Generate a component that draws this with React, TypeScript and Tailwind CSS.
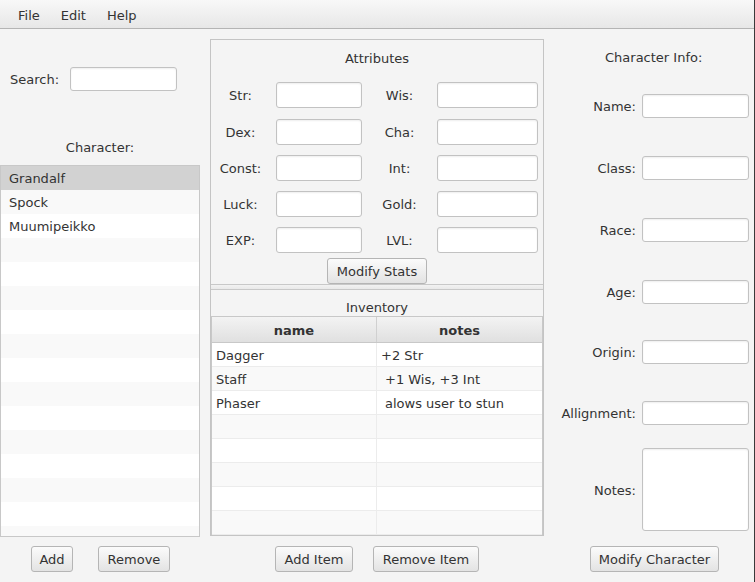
import React from "react";

const Field = ({ className = "" }: { className?: string }) => (
  <input
    className={`bg-white border border-[#c2c2c2] rounded-[3px] shadow-[inset_0_1px_2px_rgba(0,0,0,0.07)] outline-none ${className}`}
  />
);

const Btn = ({ children, className = "" }: { children: React.ReactNode; className?: string }) => (
  <button
    className={`h-[26px] rounded-[3px] border border-[#b5b5b5] bg-linear-to-b from-[#fbfbfb] to-[#e3e3e3] text-[#333] text-[13px] leading-none flex items-center justify-center ${className}`}
  >
    {children}
  </button>
);

const characters = ["Grandalf", "Spock", "Muumipeikko"];

const stats = [
  ["Str:", "Wis:"],
  ["Dex:", "Cha:"],
  ["Const:", "Int:"],
  ["Luck:", "Gold:"],
  ["EXP:", "LVL:"],
];

const items = [
  { name: "Dagger", notes: "+2 Str", pad: "pl-[4px]" },
  { name: "Staff", notes: "+1 Wis, +3 Int", pad: "pl-[8px]" },
  { name: "Phaser", notes: "alows user to stun", pad: "pl-[8px]" },
];

const infoRows = [
  { label: "Name:", mt: "mt-[28px]" },
  { label: "Class:", mt: "mt-[38px]" },
  { label: "Race:", mt: "mt-[38px]" },
  { label: "Age:", mt: "mt-[38px]" },
  { label: "Origin:", mt: "mt-[36px]" },
  { label: "Allignment:", mt: "mt-[37px]" },
];

export default function App() {
  return (
    <div className="w-[755px] h-[582px] bg-[#f4f4f4] text-[#333] text-[13px] font-['DejaVu_Sans',sans-serif] flex flex-col border-r border-[#3a3a3a] overflow-hidden">
      {/* Menu bar */}
      <div className="h-[29px] shrink-0 flex items-center gap-[21px] pl-[18px] pt-[4px] bg-linear-to-b from-[#f8f8f8] to-[#e7e7e7] border-b border-[#b4b4b4]">
        <span>File</span>
        <span>Edit</span>
        <span>Help</span>
      </div>

      <div className="flex flex-1">
        {/* Left column */}
        <div className="w-[200px] flex flex-col">
          <div className="flex items-center mt-[38px] h-[24px]">
            <span className="ml-[10px] w-[60px] pt-[2px]">Search:</span>
            <Field className="w-[107px] h-[24px]" />
          </div>
          <div className="mt-[49px] h-[16px] leading-[16px] text-center">Character:</div>
          <div className="mt-[9px] h-[372px] border border-[#c8c8c8] bg-white overflow-hidden">
            {Array.from({ length: 16 }).map((_, i) => (
              <div
                key={i}
                className={`h-[24px] flex items-center pl-[8px] pt-[2px] ${
                  i === 0 ? "bg-[#d2d2d2]" : i % 2 === 1 ? "bg-[#f9f9f9]" : "bg-white"
                }`}
              >
                {characters[i] ?? ""}
              </div>
            ))}
          </div>
          <div className="mt-[9px] flex gap-[25px] ml-[31px]">
            <Btn className="w-[42px]">Add</Btn>
            <Btn className="w-[72px]">Remove</Btn>
          </div>
        </div>

        {/* Middle column */}
        <div className="ml-[10px] w-[334px] flex flex-col">
          <div className="mt-[10px] h-[497px] border border-[#c4c4c4] flex flex-col">
            {/* Attributes */}
            <div className="h-[245px] flex flex-col">
              <div className="mt-[11px] h-[16px] leading-[16px] text-center">Attributes</div>
              <div className="mt-[15px] flex flex-col gap-[10px]">
                {stats.map(([a, b], i) => (
                  <div key={a} className={`flex items-center h-[26px] ${i === 1 ? "mt-[1px]" : ""}`}>
                    <span className="w-[59px] text-center pt-[2px]">{a}</span>
                    <Field className="ml-[6px] w-[86px] h-[26px]" />
                    <span className="w-[75px] text-center pt-[2px]">{b}</span>
                    <Field className="w-[101px] h-[26px]" />
                  </div>
                ))}
              </div>
              <div className="mt-[5px] flex justify-center">
                <Btn className="w-[100px]">Modify Stats</Btn>
              </div>
            </div>
            {/* Divider */}
            <div className="h-[7px] border-y border-[#c8c8c8] bg-linear-to-b from-[#f2f2f2] to-[#e9e9e9]" />
            {/* Inventory */}
            <div className="flex-1 flex flex-col">
              <div className="mt-[10px] h-[16px] leading-[16px] text-center">Inventory</div>
              <div className="flex-1 border-x border-t border-[#c8c8c8] bg-white overflow-hidden">
                <div className="h-[26px] flex font-bold border-b border-[#c8c8c8] bg-linear-to-b from-[#f3f3f3] to-[#e0e0e0]">
                  <div className="w-[165px] border-r border-[#d0d0d0] flex items-center justify-center pt-[2px]">name</div>
                  <div className="flex-1 flex items-center justify-center pt-[2px]">notes</div>
                </div>
                {Array.from({ length: 8 }).map((_, i) => (
                  <div
                    key={i}
                    className={`h-[24px] flex border-b border-[#ececec] ${i % 2 === 1 ? "bg-[#f9f9f9]" : "bg-white"}`}
                  >
                    <div className="w-[165px] border-r border-[#ececec] flex items-center pl-[4px] pt-[2px]">
                      {items[i]?.name ?? ""}
                    </div>
                    <div className={`flex-1 flex items-center pt-[2px] ${items[i]?.pad ?? ""}`}>
                      {items[i]?.notes ?? ""}
                    </div>
                  </div>
                ))}
              </div>
            </div>
          </div>
          <div className="mt-[10px] flex gap-[20px] ml-[65px]">
            <Btn className="w-[78px]">Add Item</Btn>
            <Btn className="w-[106px]">Remove Item</Btn>
          </div>
        </div>

        {/* Right column */}
        <div className="flex-1 flex flex-col">
          <div className="mt-[21px] h-[16px] leading-[16px] ml-[61px]">Character Info:</div>
          {infoRows.map((r) => (
            <div key={r.label} className={`${r.mt} flex items-center h-[24px]`}>
              <span className="w-[92px] text-right pt-[2px]">{r.label}</span>
              <Field className="ml-[6px] w-[107px] h-[24px]" />
            </div>
          ))}
          <div className="mt-[23px] flex items-center h-[83px]">
            <span className="w-[92px] text-right pt-[2px]">Notes:</span>
            <textarea className="ml-[6px] w-[107px] h-[83px] resize-none bg-white border border-[#c2c2c2] rounded-[3px] shadow-[inset_0_1px_2px_rgba(0,0,0,0.07)] outline-none" />
          </div>
          <div className="mt-[15px] ml-[46px]">
            <Btn className="w-[129px]">Modify Character</Btn>
          </div>
        </div>
      </div>
    </div>
  );
}
